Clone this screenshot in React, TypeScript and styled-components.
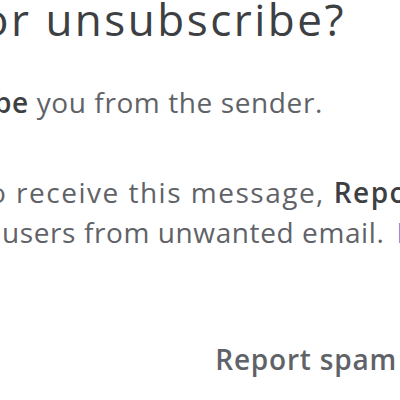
import React from "react";
import styled, { createGlobalStyle } from "styled-components";

const Global = createGlobalStyle`
  html, body {
    margin: 0;
    padding: 0;
    background: #ffffff;
  }
  body {
    width: 400px;
    height: 400px;
    overflow: hidden;
    font-family: "Open Sans", "Roboto", sans-serif;
  }
`;

const Page = styled.div`
  width: 400px;
  height: 400px;
  overflow: hidden;
  background: #ffffff;
`;

const Dialog = styled.div`
  width: 413px;
  display: flex;
  flex-direction: column;
`;

const Title = styled.h2<{ $shift: number }>`
  margin: 0;
  font-family: "Open Sans", "Roboto", sans-serif;
  font-weight: 400;
  font-size: 44px;
  line-height: 38px;
  letter-spacing: 2.5px;
  color: #3c4043;
  white-space: nowrap;
  text-indent: ${(p) => -p.$shift}px;
`;

const Paragraph = styled.div<{ $gap: number }>`
  margin-top: ${(p) => p.$gap}px;
  display: flex;
  flex-direction: column;
`;

const Line = styled.div<{ $shift: number; $track?: number }>`
  font-family: "Open Sans", "Roboto", sans-serif;
  font-size: 28px;
  line-height: 40px;
  letter-spacing: ${(p) => p.$track ?? 0.6}px;
  color: #5f6368;
  white-space: nowrap;
  text-indent: ${(p) => -p.$shift}px;
`;

const Strong = styled.b`
  font-weight: 600;
  color: #3c4043;
`;

const Link = styled.span`
  margin-left: 12px;
  color: #1a73e8;
`;

const Actions = styled.div`
  margin-top: 71px;
  display: flex;
  justify-content: flex-end;
`;

const TextButton = styled.button`
  border: none;
  background: transparent;
  padding: 16px;
  font-family: "Open Sans", "Roboto", sans-serif;
  font-weight: 600;
  font-size: 28px;
  line-height: 40px;
  letter-spacing: 0.8px;
  color: #5f6368;
  white-space: nowrap;
  cursor: pointer;
`;

export default function App() {
  return (
    <>
      <Global />
      <Page>
        <Dialog>
          <Title $shift={18}>or unsubscribe?</Title>
          <Paragraph $gap={44}>
            <Line $shift={6}>
              <Strong>be</Strong> you from the sender.
            </Line>
          </Paragraph>
          <Paragraph $gap={50}>
            <Line $shift={11} $track={1.5}>
              o receive this message, <Strong>Report spam</Strong> to
            </Line>
            <Line $shift={-2}>
              users from unwanted email.<Link>Learn more</Link>
            </Line>
          </Paragraph>
          <Actions>
            <TextButton>Report spam</TextButton>
          </Actions>
        </Dialog>
      </Page>
    </>
  );
}
